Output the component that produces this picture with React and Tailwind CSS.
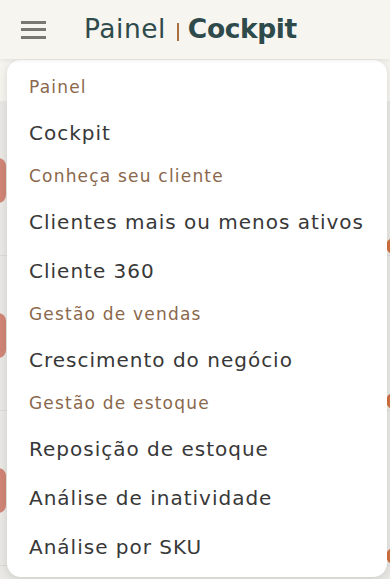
import { useState } from "react";

const MENU = [
  { section: "Painel", items: ["Cockpit"] },
  { section: "Conheça seu cliente", items: ["Clientes mais ou menos ativos", "Cliente 360"] },
  { section: "Gestão de vendas", items: ["Crescimento do negócio"] },
  { section: "Gestão de estoque", items: ["Reposição de estoque", "Análise de inatividade", "Análise por SKU"] },
];

function BackgroundCard() {
  return (
    <div className="flex h-[155px] items-start justify-between border-b border-[#dcdbd6] bg-[#e9e8e4]">
      <div className="-ml-4 mt-[57px] h-[45px] w-[22px] rounded-[8px] bg-[#d08576]" />
      <div className="-mr-3 mt-[137px] h-[16px] w-[16px] rounded-full bg-[#d2703f]" />
    </div>
  );
}

export default function App() {
  const [active, setActive] = useState("Cockpit");

  return (
    <div className="relative h-[579px] w-[390px] overflow-hidden bg-[#f5f4ef] font-['DejaVu_Sans',sans-serif]">
      <header className="relative z-10 flex h-[59px] items-center bg-[#f6f5f0] shadow-[0_2px_4px_rgba(0,0,0,0.06)]">
        <button type="button" className="ml-[21px] flex h-[20px] w-[25px] flex-col justify-between py-[1px]">
          <span className="block h-[3px] w-full bg-[#787774]" />
          <span className="block h-[3px] w-full bg-[#787774]" />
          <span className="block h-[3px] w-full bg-[#787774]" />
        </button>
        <h1 className="ml-[38px] flex items-center text-[26.5px] leading-none text-[#2f4a4b]">
          <span className="tracking-[0.5px]">Painel</span>
          <span className="ml-[11px] mr-[9px] mt-[5px] block h-[18px] w-[2px] bg-[#a8703f]" />
          <span className="font-bold tracking-[-0.4px]">Cockpit</span>
        </h1>
      </header>

      <main className="pt-[42px]">
        <BackgroundCard />
        <BackgroundCard />
        <BackgroundCard />
        <BackgroundCard />
      </main>

      <nav className="absolute left-[7px] right-[3px] top-[60px] h-[517px] rounded-[14px] bg-white py-[8px] shadow-[0_2px_10px_rgba(0,0,0,0.12)]">
        {MENU.map((group) => (
          <div key={group.section}>
            <p className="flex h-[40px] items-center pl-[22px] text-[17px] tracking-[1.2px] text-[#8a684c]">
              {group.section}
            </p>
            {group.items.map((item) => (
              <button
                key={item}
                type="button"
                onClick={() => setActive(item)}
                aria-current={active === item ? "page" : undefined}
                className="flex h-[49px] w-full items-center pl-[22px] text-left text-[20px] tracking-[1px] text-[#383838]"
              >
                {item}
              </button>
            ))}
          </div>
        ))}
      </nav>
    </div>
  );
}
